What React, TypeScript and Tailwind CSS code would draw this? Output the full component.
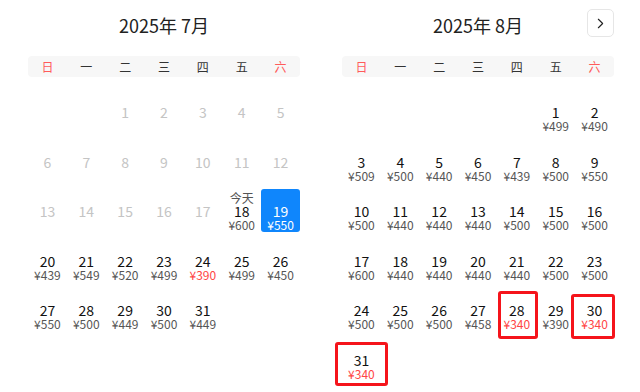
import React from 'react'
import {ChevronRight} from 'lucide-react'

type Day = {
	d: number
	price?: string
	muted?: boolean
	today?: boolean
	selected?: boolean
	low?: boolean
	box?: string
}

const weekNames = ['日', '一', '二', '三', '四', '五', '六']

const july: (Day | null)[] = [
	null, null,
	...[1, 2, 3, 4, 5, 6, 7, 8, 9, 10, 11, 12, 13, 14, 15, 16, 17].map(d => ({d, muted: true})),
	{d: 18, price: '600', today: true},
	{d: 19, price: '550', selected: true},
	{d: 20, price: '439'},
	{d: 21, price: '549'},
	{d: 22, price: '520'},
	{d: 23, price: '499'},
	{d: 24, price: '390', low: true},
	{d: 25, price: '499'},
	{d: 26, price: '450'},
	{d: 27, price: '550'},
	{d: 28, price: '500'},
	{d: 29, price: '449'},
	{d: 30, price: '500'},
	{d: 31, price: '449'},
]

const augPrices = [
	'499', '490', '509', '500', '440', '450', '439', '500', '550',
	'500', '440', '440', '440', '500', '500', '500',
	'600', '440', '440', '440', '440', '500', '500',
	'500', '500', '500', '458', '340', '390', '340', '340',
]

// red annotation frames around the cheapest days
const augBoxes: Record<number, string> = {
	28: 'top-[3px] -bottom-[8px] left-[1px] -right-[2px]',
	30: 'top-[6px] -bottom-[8px] -left-[4px] -right-[1px]',
	31: 'top-[4px] -bottom-[5px] -left-[7px] -right-[7px]',
}

const august: (Day | null)[] = [
	null, null, null, null, null,
	...augPrices.map((price, i) => ({
		d: i + 1,
		price,
		low: price === '340',
		box: augBoxes[i + 1],
	})),
]

const DayCell = ({day}: { day: Day | null }) => {
	if (!day) return <div className="h-[43px]"/>
	return (
		<div
			className={`relative h-[43px] flex flex-col items-center pt-[2px] rounded-[3px] ${day.selected ? 'bg-[#0f86fc] text-white' : ''}`}
		>
			<div className="h-[13px] text-[12px] leading-[13px] text-[#555]">
				{day.today ? '今天' : ''}
			</div>
			<div className={`h-[14px] text-[14px] leading-[14px] ${day.muted ? 'text-[#c4c4c4]' : day.selected ? 'text-white' : 'text-[#111]'}`}>
				{day.d}
			</div>
			{day.price &&
				<div className={`h-[12px] text-[12px] leading-[12px] mt-[1px] ${day.selected ? 'text-white' : day.low ? 'text-[#ff4545]' : 'text-[#555]'}`}>
					¥{day.price}
				</div>
			}
			{day.box &&
				<span className={`absolute ${day.box} border-[3px] border-[#f5141b] rounded-[3px]`}/>
			}
		</div>
	)
}

const Month = (props: { title: string, days: (Day | null)[], next?: boolean }) => {
	const {title, days, next} = props
	return (
		<div className="w-[272px] flex flex-col">
			<div className="relative h-[50px] flex items-center justify-center pb-[1px]">
				<div className="text-[18px] leading-[24px] text-[#222]">{title}</div>
				{next &&
					<div className="absolute right-0 top-[9px] w-[27px] h-[28px] rounded-[5px] border border-[#e6e6e6] flex items-center justify-center text-[#222]">
						<ChevronRight size={17} strokeWidth={1.6}/>
					</div>
				}
			</div>
			<div className="mt-[6px] h-[21px] bg-[#f7f7f7] rounded-[4px] grid grid-cols-7 items-center text-[12px]">
				{weekNames.map((w, i) =>
					<div key={w} className={`text-center ${i === 0 || i === 6 ? 'text-[#ff5b5b]' : 'text-[#333]'}`}>
						{w}
					</div>
				)}
			</div>
			<div className="mt-[13px] grid grid-cols-7 gap-y-[6.5px]">
				{days.map((day, i) => <DayCell key={i} day={day}/>)}
			</div>
		</div>
	)
}

export default function App() {
	return (
		<div
			className="w-[640px] h-[392px] bg-white overflow-hidden flex gap-[42px] pl-[28px]"
			style={{fontFamily: '"Noto Sans CJK SC", "Noto Sans", sans-serif'}}
		>
			<Month title="2025年 7月" days={july}/>
			<Month title="2025年 8月" days={august} next/>
		</div>
	)
}
